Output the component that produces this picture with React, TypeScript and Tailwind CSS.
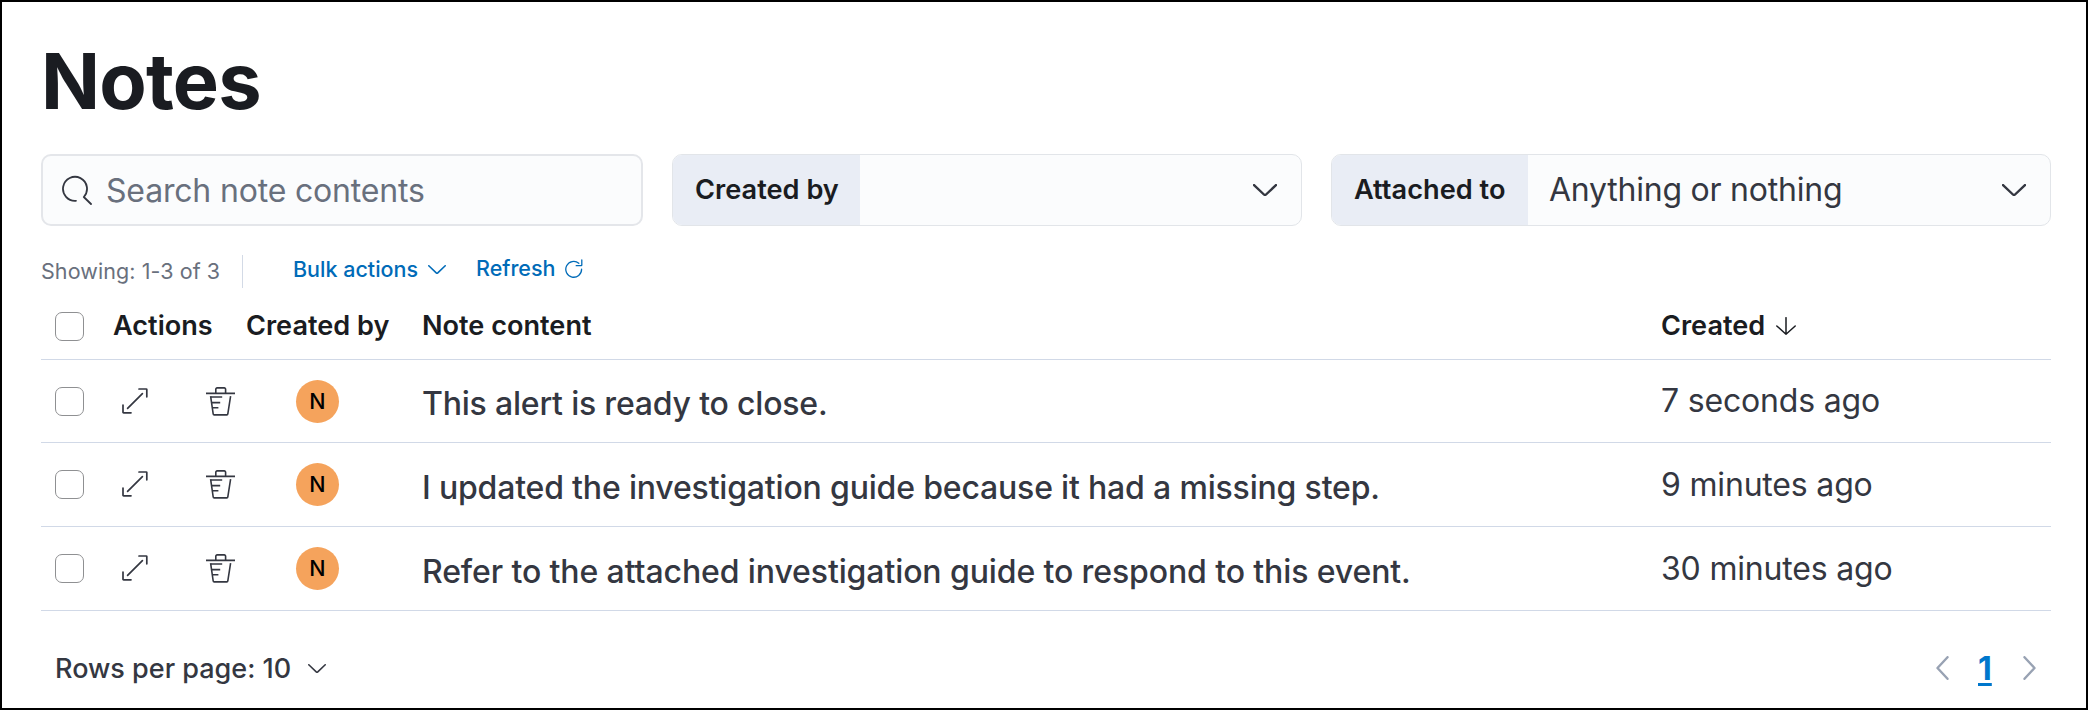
import type { ReactNode } from "react";

type Note = { content: string; created: string; height: string; text: string; time: string };

const notes: Note[] = [
  { content: "This alert is ready to close.", created: "7 seconds ago", height: "h-[83px]", text: "pt-6 tracking-[-0.2px]", time: "pt-[21px]" },
  { content: "I updated the investigation guide because it had a missing step.", created: "9 minutes ago", height: "h-[84px]", text: "pt-[25px] tracking-[-0.18px]", time: "pt-[22px]" },
  { content: "Refer to the attached investigation guide to respond to this event.", created: "30 minutes ago", height: "h-[84px]", text: "pt-[25px] tracking-[-0.11px]", time: "pt-[22px]" },
];

const columns = "grid grid-cols-[72px_133px_176px_1239px_1fr]";

function Chevron({ className, width = 1.1 }: { className: string; width?: number }) {
  return (
    <svg viewBox="0 0 16 8" fill="none" stroke="currentColor" strokeWidth={width} strokeLinecap="round" strokeLinejoin="round" className={className}>
      <path d="M.7.7 7.3 7a1 1 0 0 0 1.4 0L15.3.7" />
    </svg>
  );
}

function SearchIcon() {
  return (
    <svg viewBox="0 0 30 30" fill="none" stroke="#343741" strokeWidth="1.8" className="h-[30px] w-[30px] shrink-0">
      <path d="M14 25.8A12 12 0 1 1 21.8 22L29 29" strokeLinecap="round" strokeLinejoin="round" />
    </svg>
  );
}

function RefreshIcon() {
  return (
    <svg viewBox="0 0 18 19" fill="none" stroke="currentColor" strokeWidth="1.3" strokeLinecap="round" className="h-[19px] w-[18px]">
      <path d="M16.8.9v5.2a.6.6 0 0 1-.6.6h-5M16.6 10.2a7.9 7.9 0 1 1-2.8-5.9" />
    </svg>
  );
}

function ExpandIcon() {
  return (
    <svg viewBox="0 0 26 26" fill="none" stroke="#343741" strokeWidth="1.7" strokeLinecap="round" strokeLinejoin="round" className="h-[26px] w-[26px]">
      <path d="M17 1h7.2a.6.6 0 0 1 .6.6v7.2M1 17v7.2a.6.6 0 0 0 .6.6H9M5.6 20.4 20.4 5.6" />
    </svg>
  );
}

function TrashIcon() {
  return (
    <svg viewBox="0 0 29 29" fill="none" stroke="#343741" strokeWidth="1.6" className="h-[29px] w-[29px]">
      <path d="M0 6.4h29M9.8 6V2.2A1.3 1.3 0 0 1 11.1.9h7.2a1.3 1.3 0 0 1 1.3 1.3V6M4.2 10h12M4.6 9.2 7.2 27a1 1 0 0 0 1 .9h12.6a1 1 0 0 0 1-.9L24.6 9.2M6 15.6h8.2M6.8 20.7h5.6" />
    </svg>
  );
}

function ArrowDown() {
  return (
    <svg viewBox="0 0 20 18" fill="none" stroke="#1a1c21" strokeWidth="1.5" strokeLinecap="round" strokeLinejoin="round" className="h-[18px] w-5">
      <path d="M10 .7v16.5M.8 9 10 17.2 19.2 9" />
    </svg>
  );
}

function Checkbox() {
  return <span className="block h-[29px] w-[29px] rounded-[7px] border border-[#8f9092] bg-white" />;
}

function Field({ label, width, labelWidth, children }: { label: string; width: string; labelWidth: string; children?: ReactNode }) {
  return (
    <div className={`flex h-[72px] shrink-0 items-center overflow-hidden rounded-[10px] border border-[#e2e5e9] bg-[#fbfcfd] ${width}`}>
      <div className={`flex h-full shrink-0 items-center bg-[#e9edf5] pl-[22px] text-[27.2px] font-semibold whitespace-nowrap text-[#1a1c21] ${labelWidth}`}>
        {label}
      </div>
      <div className="flex-1 pl-[21px] text-[32px] tracking-[-0.23px] whitespace-nowrap text-[#343741]">{children}</div>
      <Chevron className="mr-[24px] h-3 w-6 text-[#343741]" width={1.6} />
    </div>
  );
}

export default function App() {
  return (
    <main className="h-[710px] w-[2088px] overflow-hidden border-2 border-black bg-white pr-[35px] pl-[39px] font-['Inter',sans-serif] text-[#343741]">
      <h1 className="mt-[39px] h-20 text-[77.5px] leading-[80px] font-bold tracking-[-0.8px] text-[#1a1c21]">Notes</h1>

      <div className="mt-[33px] flex gap-[29px]">
        <div className="flex h-[72px] w-[602px] shrink-0 items-center gap-[14px] rounded-[10px] border-2 border-[#e4e6ea] bg-[#fbfcfd] pl-[19px] text-[32px] tracking-[-0.18px] text-[#69707d]">
          <SearchIcon />
          <span className="pt-0.5 whitespace-nowrap">Search note contents</span>
        </div>
        <Field label="Created by" width="w-[630px]" labelWidth="w-[187px]" />
        <Field label="Attached to" width="w-[720px]" labelWidth="w-[196px]">Anything or nothing</Field>
      </div>

      <div className="mt-[29px] flex h-[33px] text-[21.5px] leading-[32px] whitespace-nowrap">
        <div className="w-[201px] tracking-[0.08px] text-[#69707d]">Showing: 1-3 of 3</div>
        <div className="h-[33px] w-px bg-[#d3dae6]" />
        <button className="-mt-0.5 ml-[50px] flex h-8 w-[184px] items-center text-left font-medium text-[#006bb8]">
          <span className="w-[135px]">Bulk actions</span>
          <Chevron className="h-[9px] w-[18px]" width={1.4} />
        </button>
        <button className="-mt-[3px] -ml-px flex h-8 items-center text-left font-medium text-[#006bb8]">
          <span className="w-[89px]">Refresh</span>
          <RefreshIcon />
        </button>
      </div>

      <div className={`${columns} mt-[6px] h-[66px] border-b border-[#d1d9e7] text-[27.1px] leading-[32px] font-semibold whitespace-nowrap text-[#1a1c21]`}>
        <div className="pt-[18px] pl-[14px]"><Checkbox /></div>
        <div className="pt-4">Actions</div>
        <div className="pt-4">Created by</div>
        <div className="pt-4">Note content</div>
        <div className="flex pt-4">
          <span className="w-[115px]">Created</span>
          <span className="pt-[7px]"><ArrowDown /></span>
        </div>
      </div>

      {notes.map((note) => (
        <div key={note.content} className={`${columns} ${note.height} border-b border-[#d1d9e7]`}>
          <div className="pt-[27px] pl-[14px]"><Checkbox /></div>
          <div className="flex gap-[58px] pt-[27px] pl-[9px]">
            <span className="pt-px"><ExpandIcon /></span>
            <TrashIcon />
          </div>
          <div className="pt-5 pl-[50px]">
            <div className="h-[43px] w-[43px] rounded-full bg-[#f5a35c] text-center text-[21.5px] leading-[42px] font-medium text-black">N</div>
          </div>
          <div className={`text-[32px] leading-[40px] font-medium whitespace-nowrap ${note.text}`}>{note.content}</div>
          <div className={`text-[32px] leading-[40px] tracking-[-0.18px] whitespace-nowrap ${note.time}`}>{note.created}</div>
        </div>
      ))}

      <div className="mt-[37px] flex h-10 items-center justify-between">
        <button className="flex items-center pl-[14px] text-left text-[27px] leading-[40px] font-medium whitespace-nowrap">
          <span className="w-[253px] pt-0.5">Rows per page: 10</span>
          <Chevron className="h-[9px] w-[18px]" width={1.4} />
        </button>
        <nav className="flex items-center pr-[15px] text-[#98a2b3]">
          <svg viewBox="0 0 13 24" fill="none" stroke="currentColor" strokeWidth="2.4" strokeLinecap="round" strokeLinejoin="round" className="h-6 w-[13px]"><path d="M11.5 1.2 1.5 12l10 10.8" /></svg>
          <span className="mx-[29px] w-4 pt-0.5 text-[32px] leading-[40px] font-bold text-[#0077cc] underline decoration-[3px] underline-offset-[3px]">1</span>
          <svg viewBox="0 0 13 24" fill="none" stroke="currentColor" strokeWidth="2.4" strokeLinecap="round" strokeLinejoin="round" className="h-6 w-[13px]"><path d="m1.5 1.2 10 10.8-10 10.8" /></svg>
        </nav>
      </div>
    </main>
  );
}
